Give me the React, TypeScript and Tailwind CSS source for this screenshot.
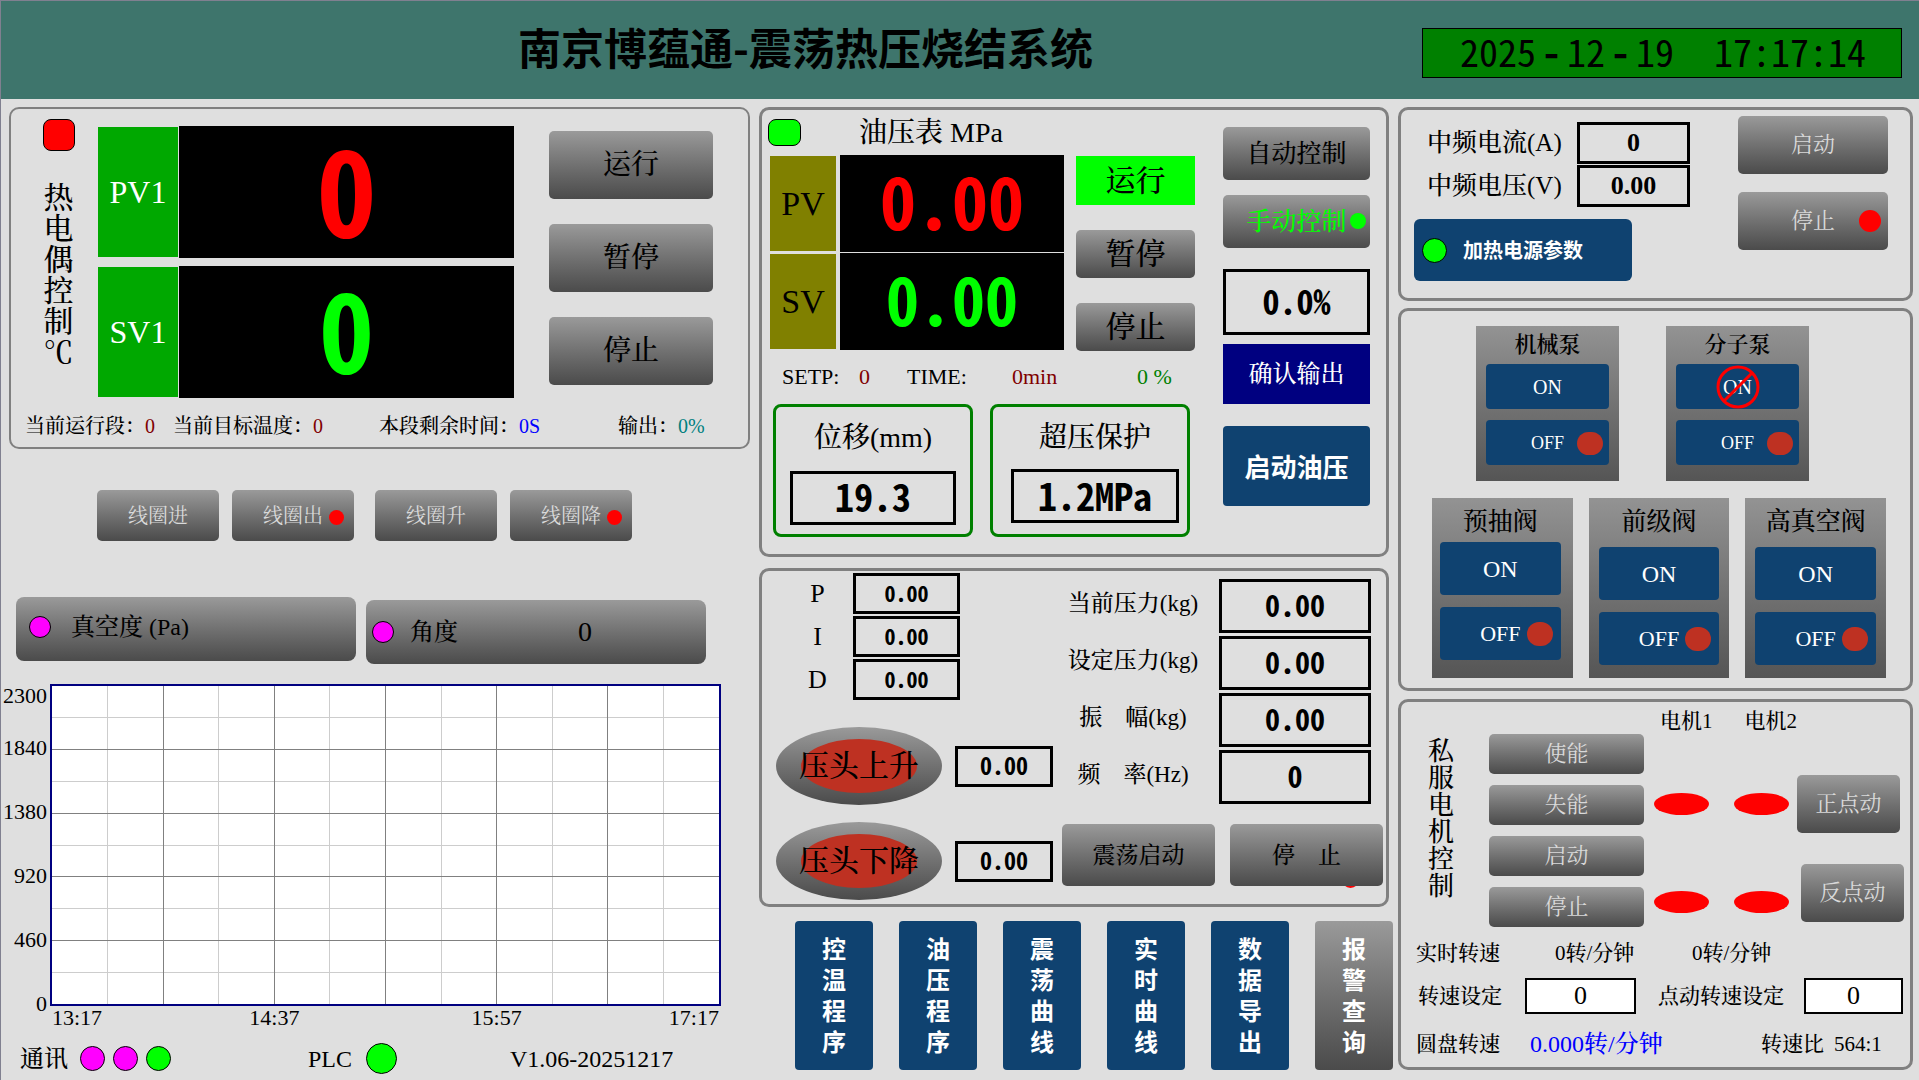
import type { ReactNode } from "react";

const gray = "bg-linear-to-b from-[#9a9a9a] to-[#4b4b4b]";
const sans = "font-['Noto_Sans_CJK_SC','Liberation_Sans',sans-serif]";
const mono = "font-['Noto_Sans_Mono_CJK_SC','Noto_Sans_CJK_SC',monospace]";

function Panel({ className = "", children }: { className?: string; children: ReactNode }) {
  return (
    <section className={`rounded-[10px] border-[3px] border-[#808080] ${className}`}>{children}</section>
  );
}

function GrayButton({ className = "", children }: { className?: string; children: ReactNode }) {
  return (
    <button
      type="button"
      className={`relative flex items-center justify-center rounded-[5px] leading-none whitespace-nowrap ${gray} ${className}`}
    >
      {children}
    </button>
  );
}

function BlueButton({ className = "", children }: { className?: string; children: ReactNode }) {
  return (
    <button
      type="button"
      className={`relative flex items-center justify-center rounded bg-[#0f4270] leading-none whitespace-nowrap text-white ${className}`}
    >
      {children}
    </button>
  );
}

function Field({ label, value, className = "" }: { label: string; value: string; className?: string }) {
  return (
    <input
      aria-label={label}
      defaultValue={value}
      className={`w-full min-w-0 border-black px-0 pt-0 pb-1 text-center ${className}`}
    />
  );
}

function Dot({ className = "" }: { className?: string }) {
  return <span className={`shrink-0 rounded-full ${className}`} />;
}

function VerticalText({ text, className = "" }: { text: string; className?: string }) {
  return <span className={`w-[1em] break-all whitespace-pre-line ${className}`}>{text}</span>;
}

function Header() {
  return (
    <header className="flex h-[98px] items-center bg-[#3e756c] pr-[17px]">
      <h1 className={`-mt-2 flex-1 pl-[188px] text-center text-[43px] leading-[48px] font-bold whitespace-nowrap ${sans}`}>
        南京博蕴通-震荡热压烧结系统
      </h1>
      <time
        className={`mt-1.5 flex h-[50px] w-[480px] items-center border border-black bg-[#008000] pb-1 pl-[37px] text-[38px] leading-none font-medium ${mono}`}
      >
        <span className="flex gap-1.5">
          <span>2025</span>
          <span className="font-bold">-</span>
          <span>12</span>
          <span className="font-bold">-</span>
          <span>19</span>
        </span>
        <span className="ml-10">17:17:14</span>
      </time>
    </header>
  );
}

function Thermocouple() {
  const label = "my-px flex w-20 items-center justify-center bg-[#00a800] text-[32px] text-white";
  const screen = `flex flex-1 items-center justify-center bg-black pb-3 leading-none font-bold ${mono}`;
  return (
    <section className="rounded-[10px] border-2 border-[#808080] pb-[9px]">
      <div className="grid grid-cols-[87fr_416fr_234fr]">
        <div className="flex flex-col items-center pt-[10px] pl-2">
          <span className="size-8 rounded-lg border border-black bg-[#ff0000]" />
          <VerticalText text={"热电偶控制\n℃"} className="mt-[31px] text-[30px] leading-[31px] font-medium" />
        </div>
        <div className="flex flex-col gap-2 pt-[17px]">
          <div className="flex h-[132px] gap-px">
            <div className={label}>PV1</div>
            <output className={`${screen} text-[120px] text-[#ff0000]`}>0</output>
          </div>
          <div className="flex h-[132px] gap-px">
            <div className={label}>SV1</div>
            <output className={`${screen} text-[110px] text-[#00ff00]`}>0</output>
          </div>
        </div>
        <div className="flex flex-col gap-[25px] px-[35px] pt-[22px] text-[28px] font-medium">
          <GrayButton className="h-[68px]">运行</GrayButton>
          <GrayButton className="h-[68px]">暂停</GrayButton>
          <GrayButton className="h-[68px]">停止</GrayButton>
        </div>
      </div>
      <div className="mt-4 grid h-6 grid-cols-[148fr_206fr_239fr_130fr] items-center pl-[14px] text-xl leading-6 font-medium whitespace-nowrap">
        <div>当前运行段：<output className="text-[#800000]">0</output></div>
        <div>当前目标温度：<output className="text-[#800000]">0</output></div>
        <div>本段剩余时间：<output className="text-[#0000ff]">0S</output></div>
        <div>输出：<output className="text-[#008080]">0%</output></div>
      </div>
    </section>
  );
}

function Coils() {
  const size = "h-[51px] w-[122px] text-xl text-[#d9d9d9]";
  const dot = "absolute size-[15px] bg-[#ff0000]";
  return (
    <div className="mt-[41px] flex gap-[21px] pl-[88px]">
      <div className="flex gap-[13px]">
        <GrayButton className={size}>线圈进</GrayButton>
        <GrayButton className={size}>
          线圈出
          <Dot className={`${dot} top-5 right-2.5`} />
        </GrayButton>
      </div>
      <div className="flex gap-[13px]">
        <GrayButton className={size}>线圈升</GrayButton>
        <GrayButton className={size}>
          线圈降
          <Dot className={`${dot} top-5 right-2.5`} />
        </GrayButton>
      </div>
    </div>
  );
}

function Trend() {
  const cols = Array.from({ length: 11 }, (_, i) => i + 1);
  const rows = Array.from({ length: 9 }, (_, i) => i + 1);
  return (
    <div className="mt-5 -ml-2 flex pr-[29px] text-[22px] leading-6">
      <div className="grid w-[49px] grid-rows-[52px_64px_64px_64px_64px_24px] self-start pr-[3px] text-right">
        {["2300", "1840", "1380", "920", "460", "0"].map((v) => (
          <span key={v}>{v}</span>
        ))}
      </div>
      <div className="flex-1">
        <div className="h-[322px] border-2 border-[#000080] bg-white">
          <svg className="size-full" shapeRendering="crispEdges" aria-label="温度趋势">
            {[1, 0].map((odd) => (
              <g key={odd} stroke={odd ? "#cdcdcd" : "#808080"} strokeWidth="1">
                {cols.filter((c) => c % 2 === odd).map((c) => (
                  <line key={`c${c}`} x1={`${(c * 100) / 12}%`} x2={`${(c * 100) / 12}%`} y1="0" y2="100%" />
                ))}
                {rows.filter((r) => r % 2 === odd).map((r) => (
                  <line key={`r${r}`} x1="0" x2="100%" y1={`${r * 10}%`} y2={`${r * 10}%`} />
                ))}
              </g>
            ))}
          </svg>
        </div>
        <div className="grid grid-cols-6 px-0.5">
          <span>13:17</span>
          <span className="col-span-2 text-center">14:37</span>
          <span className="col-span-2 text-center">15:57</span>
          <span className="text-right">17:17</span>
        </div>
      </div>
    </div>
  );
}

function LeftColumn() {
  return (
    <div>
      <Thermocouple />
      <Coils />
      <div className="mt-14 grid h-[67px] grid-cols-2 gap-2.5 pr-[44px] pl-[7px] text-2xl leading-6 font-medium">
        <div className={`flex h-16 items-center self-start rounded-lg pb-1 pl-[13px] ${gray}`}>
          <Dot className="size-[22px] border border-black bg-[#ff00ff]" />
          <span className="ml-5">真空度 (Pa)</span>
        </div>
        <div className={`flex h-16 items-center self-end rounded-lg pl-1.5 ${gray}`}>
          <Dot className="size-[22px] border border-black bg-[#ff00ff]" />
          <span className="ml-4">角度</span>
          <output className="ml-[120px] text-[28px]">0</output>
        </div>
      </div>
      <Trend />
      <footer className="mt-[13px] grid h-[31px] grid-cols-[288fr_202fr_240fr] items-center pl-[11px] text-2xl leading-6">
        <div className="flex items-center gap-2">
          <span className="mr-1 font-medium">通讯</span>
          <Dot className="size-[25px] border border-black bg-[#ff00ff]" />
          <Dot className="size-[25px] border border-black bg-[#ff00ff]" />
          <Dot className="size-[25px] border border-black bg-[#00ff00]" />
        </div>
        <div className="flex items-center gap-3.5">
          <span>PLC</span>
          <Dot className="size-[31px] border border-black bg-[#00ff00]" />
        </div>
        <span>V1.06-20251217</span>
      </footer>
    </div>
  );
}

function Meter({ name, value, tone }: { name: string; value: string; tone: string }) {
  return (
    <div className="flex h-[97px] gap-1">
      <div className="my-px flex w-[66px] items-center justify-center bg-[#808000] text-[34px]">{name}</div>
      <output className={`flex flex-1 items-center justify-center bg-black pb-2.5 leading-none font-bold ${mono} ${tone}`}>
        {value}
      </output>
    </div>
  );
}

function OilPressure() {
  const box = `h-[54px] border-[3px] text-[38px] leading-none font-bold ${mono}`;
  return (
    <Panel className="grid grid-cols-[435fr_189fr] pb-[17px]">
      <div>
        <div className="flex h-[45px] items-center pl-1.5">
          <span className="h-[27px] w-[33px] rounded-lg border border-black bg-[#00ff00]" />
          <h2 className="ml-[58px] text-[28px] leading-8 font-medium">油压表 MPa</h2>
        </div>
        <div className="grid grid-cols-[294fr_119fr] gap-3 pr-0.5 pl-2">
          <div className="flex flex-col gap-px">
            <Meter name="PV" value="0.00" tone="text-[#ff0000] text-[72px]" />
            <Meter name="SV" value="0.00" tone="text-[#00ff00] text-[66px]" />
          </div>
          <div className="flex flex-col gap-[25px] pt-px text-[30px] leading-none font-medium">
            <button type="button" className="h-[49px] bg-[#00ff00]">运行</button>
            <GrayButton className="h-12">暂停</GrayButton>
            <GrayButton className="h-12">停止</GrayButton>
          </div>
        </div>
        <div className="mt-[14px] grid h-6 grid-cols-[77fr_48fr_105fr_125fr_60fr] items-center pl-5 text-[22px] leading-6 whitespace-nowrap">
          <span>SETP:</span>
          <output className="text-[#800000]">0</output>
          <span>TIME:</span>
          <output className="text-[#800000]">0min</output>
          <output className="text-[#008000]">0 %</output>
        </div>
        <div className="mt-[15px] grid grid-cols-2 gap-[17px] pr-[7px] pl-[11px]">
          <div className="flex flex-col rounded-lg border-[3px] border-[#008000] px-[14px] pt-[13px] pb-[9px]">
            <h3 className="text-center text-[28px] leading-9 font-medium">位移(mm)</h3>
            <output className={`mt-[15px] flex items-center justify-center border-black pb-1 ${box}`}>19.3</output>
          </div>
          <div className="flex flex-col rounded-lg border-[3px] border-[#008000] pt-[13px] pr-2 pb-[9px] pl-[18px]">
            <h3 className="text-center text-[28px] leading-9 font-medium">超压保护</h3>
            <Field label="超压保护" value="1.2MPa" className={`mt-[13px] ${box}`} />
          </div>
        </div>
      </div>
      <div className="flex flex-col pt-[17px] pr-4 pl-[26px] text-[25px] font-medium">
        <GrayButton className="h-[53px]">自动控制</GrayButton>
        <GrayButton className="mt-[15px] h-[53px] text-[#00ff00]">
          手动控制
          <Dot className="absolute top-[18px] right-1 size-4 bg-[#00ff00]" />
        </GrayButton>
        <Field label="手动输出" value="0.0%" className={`mt-[21px] h-[66px] border-[3px] text-[34px] leading-none font-bold ${mono}`} />
        <button type="button" className="mt-[9px] h-[60px] bg-[#000080] text-2xl text-white">确认输出</button>
        <BlueButton className={`mt-[22px] h-20 text-[26px] font-bold ${sans}`}>启动油压</BlueButton>
      </div>
    </Panel>
  );
}

function PressHead({ name }: { name: string }) {
  return (
    <div className="flex items-center gap-[13px] pl-[14px]">
      <button
        type="button"
        className={`flex h-[78px] w-[166px] items-center justify-center rounded-[50%] ${gray}`}
      >
        <span className="flex h-[54px] w-[116px] items-center justify-center rounded-[50%] bg-[#be3122] text-[30px] leading-none font-medium whitespace-nowrap">
          {name}
        </span>
      </button>
      <div className="w-[98px]">
        <Field label={name} value="0.00" className={`h-[41px] border-[3px] text-2xl leading-none font-bold ${mono}`} />
      </div>
    </div>
  );
}

function Oscillation() {
  return (
    <Panel className="mt-[11px] grid grid-cols-[296fr_328fr] pb-1">
      <div>
        <div className="grid grid-cols-[91fr_107fr_98fr] gap-y-0.5 pt-0.5">
          {["P", "I", "D"].map((k) => (
            <label key={k} className="contents">
              <span className="pl-5 text-center text-[26px] leading-[41px]">{k}</span>
              <Field label={k} value="0.00" className={`h-[41px] border-[3px] text-[22px] leading-none font-bold ${mono}`} />
              <span />
            </label>
          ))}
        </div>
        <div className="mt-[27px] flex flex-col gap-[17px]">
          <PressHead name="压头上升" />
          <PressHead name="压头下降" />
        </div>
      </div>
      <div>
        <div className="grid grid-cols-[154fr_152fr] gap-y-[3px] pt-2 pr-[15px] pl-[7px]">
          {[
            ["当前压力(kg)", "0.00"],
            ["设定压力(kg)", "0.00"],
            ["振　幅(kg)", "0.00"],
            ["频　率(Hz)", "0"],
          ].map(([name, value]) => (
            <label key={name} className="contents">
              <span className="pr-[18px] text-center text-[23px] leading-[50px] font-medium whitespace-nowrap">{name}</span>
              <Field label={name} value={value} className={`h-[54px] border-[3px] text-[30px] leading-none font-bold ${mono}`} />
            </label>
          ))}
        </div>
        <div className="mt-5 grid grid-cols-2 gap-[15px] pr-[3px] pl-1 text-[23px] font-medium">
          <GrayButton className="h-[62px]">震荡启动</GrayButton>
          <div className="relative isolate">
            <Dot className="absolute right-6 -bottom-0.5 -z-10 size-[17px] bg-[#ff0000]" />
            <GrayButton className="h-[62px] w-full">停　止</GrayButton>
          </div>
        </div>
      </div>
    </Panel>
  );
}

function PageNav() {
  return (
    <nav className={`mt-[14px] -mr-1 grid grid-cols-6 gap-[26px] pl-9 text-2xl leading-[31px] font-bold text-white ${sans}`}>
      {["控温程序", "油压程序", "震荡曲线", "实时曲线", "数据导出", "报警查询"].map((name, i) => (
        <a
          key={name}
          href="#"
          aria-label={name}
          className={`flex h-[149px] items-center justify-center rounded pb-1 ${i === 5 ? gray : "bg-[#0f4270]"}`}
        >
          <VerticalText text={name} />
        </a>
      ))}
    </nav>
  );
}

function PowerSupply() {
  const box = "h-[42px] border-[3px] bg-transparent text-[26px] leading-none font-bold";
  return (
    <Panel className="grid grid-cols-[289fr_220fr] pb-[17px]">
      <div className="pt-3">
        <div className="grid grid-cols-[150fr_113fr] gap-y-px pl-[26px] text-[25px] leading-[42px] font-medium whitespace-nowrap">
          <label htmlFor="mf-current">中频电流(A)</label>
          <input id="mf-current" defaultValue="0" className={`w-full min-w-0 border-black text-center ${box}`} />
          <label htmlFor="mf-voltage">中频电压(V)</label>
          <input id="mf-voltage" defaultValue="0.00" className={`w-full min-w-0 border-black text-center ${box}`} />
        </div>
        <button
          type="button"
          className={`mt-3 ml-[13px] flex h-[62px] w-[218px] items-center rounded-md bg-[#0f4270] pl-2 text-xl leading-none font-bold text-white ${sans}`}
        >
          <Dot className="size-[25px] border border-black bg-[#00ff00]" />
          <span className="ml-4">加热电源参数</span>
        </button>
      </div>
      <div className="flex flex-col gap-[18px] pt-1.5 pr-[22px] pl-12 text-[22px] text-[#d9d9d9]">
        <GrayButton className="h-[58px]">启动</GrayButton>
        <GrayButton className="h-[58px]">
          停止
          <Dot className="absolute top-[18px] right-[7px] size-[22px] bg-[#ff0000]" />
        </GrayButton>
      </div>
    </Panel>
  );
}

function PumpCard({ name, blocked = false }: { name: string; blocked?: boolean }) {
  return (
    <div className="flex h-[155px] flex-col bg-linear-to-b from-[#939393] to-[#555] px-2.5">
      <h3 className="text-center text-[22px] leading-[38px] font-semibold">{name}</h3>
      <BlueButton className="h-[45px] text-xl font-medium">
        ON
        {blocked && (
          <svg viewBox="0 0 44 44" className="absolute size-11" fill="none" stroke="#ff0000" strokeWidth="3">
            <circle cx="22" cy="22" r="20" />
            <path d="M36 8 8 36" />
          </svg>
        )}
      </BlueButton>
      <BlueButton className="mt-[11px] h-[45px] text-lg font-medium">
        OFF
        <Dot className="absolute top-3 right-1.5 h-[23px] w-[26px] bg-[#be3122]" />
      </BlueButton>
    </div>
  );
}

function ValveCard({ name, className = "" }: { name: string; className?: string }) {
  return (
    <div className={`flex h-[180px] flex-col bg-linear-to-b from-[#939393] to-[#555] ${className}`}>
      <h3 className="pt-1 text-center text-[25px] leading-10 font-medium whitespace-nowrap">{name}</h3>
      <BlueButton className="h-[53px] text-2xl">ON</BlueButton>
      <BlueButton className="mt-3 h-[53px] text-[22px]">
        OFF
        <Dot className="absolute top-[15px] right-2 h-6 w-[26px] bg-[#be3122]" />
      </BlueButton>
    </div>
  );
}

function Vacuum() {
  return (
    <Panel className="mt-[7px] pt-[15px] pb-2.5">
      <div className="grid grid-cols-2 gap-[47px] pr-[101px] pl-[75px]">
        <PumpCard name="机械泵" />
        <PumpCard name="分子泵" blocked />
      </div>
      <div className="mt-[17px] grid grid-cols-3 gap-4 pr-6 pl-[31px]">
        <ValveCard name="预抽阀" className="pr-3 pl-2" />
        <ValveCard name="前级阀" className="px-2.5 [&>h3]:pb-[5px]" />
        <ValveCard name="高真空阀" className="px-2.5 [&>h3]:pb-[5px]" />
      </div>
    </Panel>
  );
}

function Motors() {
  const lamp = "h-[22px] w-[55px] rounded-[50%] bg-[#ff0000]";
  const box = "h-9 border-2 bg-white text-[26px] leading-none font-medium";
  return (
    <Panel className="mt-2 pb-[11px] font-medium">
      <div className="grid grid-cols-[88fr_155fr_153fr_113fr]">
        <div className="flex justify-center pt-9 pr-2 text-[26px] leading-[27px]">
          <VerticalText text="私服电机控制" />
        </div>
        <div className="flex flex-col gap-[11px] pt-8 text-[22px] font-normal text-[#d9d9d9]">
          {["使能", "失能", "启动", "停止"].map((name) => (
            <GrayButton key={name} className="h-10">{name}</GrayButton>
          ))}
        </div>
        <div className="pt-[7px]">
          <div className="flex justify-between pl-4 text-[21px] leading-6 whitespace-nowrap">
            <span>电机1</span>
            <span>电机2</span>
          </div>
          <div className="mt-[60px] flex flex-col gap-[76px] pr-2 pl-2.5">
            <div className="flex justify-between">
              <span className={lamp} />
              <span className={lamp} />
            </div>
            <div className="flex justify-between">
              <span className={lamp} />
              <span className={lamp} />
            </div>
          </div>
        </div>
        <div className="flex flex-col gap-[31px] pt-[73px] pr-1.5 text-[22px] font-normal text-[#d9d9d9]">
          <GrayButton className="h-[58px] w-[103px] self-start">正点动</GrayButton>
          <GrayButton className="h-[58px] w-[103px] self-end">反点动</GrayButton>
        </div>
      </div>
      <div className="mt-[14px] grid grid-cols-[139fr_137fr_218fr] pl-[15px] text-[21px] leading-6 whitespace-nowrap">
        <span>实时转速</span>
        <output>0转/分钟</output>
        <output>0转/分钟</output>
      </div>
      <div className="mt-[13px] grid grid-cols-[107fr_111fr_168fr_99fr] items-center pr-[7px] pl-[17px] text-[21px] leading-9 whitespace-nowrap">
        <label htmlFor="speed">转速设定</label>
        <input id="speed" defaultValue="0" className={`w-full min-w-0 border-black text-center ${box}`} />
        <label htmlFor="jog-speed" className="pl-[22px]">点动转速设定</label>
        <input id="jog-speed" defaultValue="0" className={`w-full min-w-0 border-black text-center ${box}`} />
      </div>
      <div className="mt-[18px] grid grid-cols-[114fr_231fr_73fr_76fr] pl-[15px] text-[21px] leading-6 whitespace-nowrap">
        <span>圆盘转速</span>
        <output className="text-2xl leading-6 text-[#0000ff]">0.000转/分钟</output>
        <span>转速比</span>
        <span>564:1</span>
      </div>
    </Panel>
  );
}

export default function App() {
  return (
    <div className="min-h-screen border-t border-l border-[#808090] bg-[#dfdfdf] font-['Liberation_Serif','Noto_Serif_CJK_SC','Noto_Sans_CJK_SC',serif] text-black">
      <Header />
      <main className="grid grid-cols-[741fr_630fr_515fr] gap-x-[9px] pt-2 pr-1.5 pl-2">
        <LeftColumn />
        <div>
          <OilPressure />
          <Oscillation />
          <PageNav />
        </div>
        <div>
          <PowerSupply />
          <Vacuum />
          <Motors />
        </div>
      </main>
    </div>
  );
}
